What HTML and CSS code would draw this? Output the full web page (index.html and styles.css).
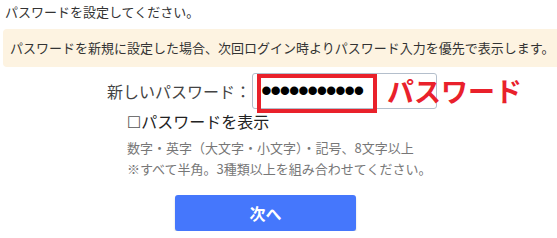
FILE: index.html
```html
<!doctype html>
<html>

<head>
  <title>パスワード設定</title>
  <link rel="stylesheet" href="styles.css">
</head>

<body>
  <p class="title">パスワードを設定してください。</p>
  <div class="notice">パスワードを新規に設定した場合、次回ログイン時よりパスワード入力を優先で表示します。</div>

  <form class="form">
    <div class="form-row">
      <label class="form-label" for="pw">新しいパスワード：</label>
      <div class="input-wrap">
        <input id="pw" class="pw-input" type="password" value="abcdefghijk">
        <!-- 注釈 -->
        <span class="mark-box"></span>
        <span class="mark-text">パスワード</span>
      </div>
    </div>
    <div class="show-pw"><span class="box">☐</span>パスワードを表示</div>
    <div class="hint">
      <div>数字・英字（大文字・小文字）・記号、8文字以上</div>
      <div>※すべて半角。3種類以上を組み合わせてください。</div>
    </div>
    <button type="button" class="next-btn">次へ</button>
  </form>
</body>

</html>
```

FILE: styles.css
```css
html,
body {
  overflow: hidden;
}

body {
  margin: 0;
  font-family: "Noto Sans CJK JP", sans-serif;
  font-size: 13px;
  color: #333;
  background-color: #fff;
}

.title {
  margin: 0;
  padding-left: 5px;
  line-height: 24px;
}

.notice {
  margin: 5px -20px 0 3px;
  padding-left: 7px;
  height: 38px;
  line-height: 38px;
  border-radius: 4px;
  background-color: #fdf3e1;
  white-space: nowrap;
}

.form {
  margin: 0;
}

.form-row {
  display: flex;
  align-items: center;
  margin-top: 6px;
  padding-left: 107px;
}

.form-label {
  width: 145px;
  font-size: 16px;
  color: #444;
  white-space: nowrap;
}

.input-wrap {
  position: relative;
  width: 185px;
  height: 36px;
}

.pw-input {
  box-sizing: border-box;
  width: 100%;
  height: 100%;
  margin: 0;
  padding: 0 0 0 8px;
  border: 1px solid #b4bfcc;
  border-radius: 3px;
  font-family: "Liberation Sans", sans-serif;
  font-size: 31px;
  letter-spacing: -1.6px;
  color: #000;
  background-color: #fff;
  outline: none;
}

.mark-box {
  position: absolute;
  left: 5px;
  top: 1px;
  width: 120px;
  height: 39px;
  box-sizing: border-box;
  border: 4px solid #e9212b;
}

.mark-text {
  position: absolute;
  left: 135px;
  top: 50%;
  transform: translateY(-50%);
  font-size: 27px;
  font-weight: bold;
  line-height: 30px;
  color: #e9212b;
  white-space: nowrap;
}

.show-pw {
  padding-left: 127px;
  font-size: 16px;
  line-height: 24px;
  color: #222;
}

.show-pw .box {
  font-family: "DejaVu Sans", sans-serif;
  font-size: 16px;
  color: #555;
}

.hint {
  margin-top: 2px;
  padding-left: 127px;
  line-height: 21px;
  color: #777;
}

.next-btn {
  display: block;
  margin: 16px 0 0 175px;
  width: 181px;
  height: 36px;
  border: none;
  border-radius: 3px;
  background-color: #4577fc;
  box-shadow: 0 2px 2px rgba(0, 0, 0, 0.18);
  color: #fff;
  font-family: "Noto Sans CJK JP", sans-serif;
  font-size: 16px;
  font-weight: bold;
  cursor: pointer;
}
```
